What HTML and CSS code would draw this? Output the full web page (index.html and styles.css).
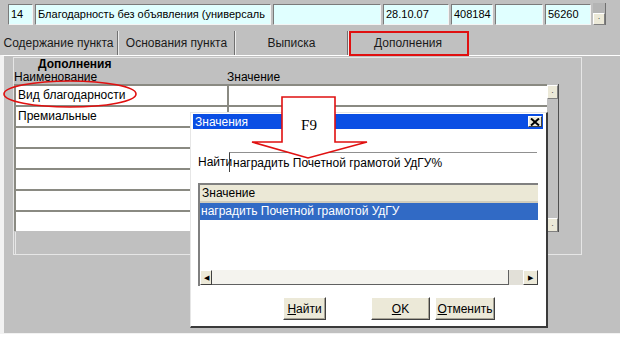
FILE: index.html
```html
<!DOCTYPE html>
<html lang="ru">
  <head>
    <meta charset="UTF-8" />
    <title>Дополнения</title>
    <link rel="stylesheet" href="styles.css">
  </head>
  <body>
    <div class="app">
      <div class="topbar">
        <div class="field w1">14</div>
        <div class="field w2">Благодарность без объявления (универсаль</div>
        <div class="field w3"></div>
        <div class="field w4">28.10.07</div>
        <div class="field w5">408184</div>
        <div class="field w6"></div>
        <div class="field w7">56260</div>
        <div class="mini-scroll"><div class="mini-btn">·</div></div>
      </div>

      <div class="tabs">
        <div class="tab t1">Содержание пункта</div>
        <div class="tab t2">Основания пункта</div>
        <div class="tab t3">Выписка</div>
        <div class="tab t4">Дополнения</div>
      </div>

      <div class="content">
        <div class="group">
          <div class="group-title">Дополнения</div>
          <div class="labels">
            <div class="lbl-name">Наименование</div>
            <div class="lbl-value">Значение</div>
          </div>
          <div class="grid">
            <div class="col names">
              <div class="cell">Вид благодарности</div>
              <div class="cell">Премиальные</div>
              <div class="cell"></div>
              <div class="cell"></div>
              <div class="cell"></div>
              <div class="cell"></div>
              <div class="cell"></div>
            </div>
            <div class="col values">
              <div class="cell"></div>
              <div class="cell"></div>
              <div class="cell"></div>
              <div class="cell"></div>
              <div class="cell"></div>
              <div class="cell"></div>
              <div class="cell"></div>
            </div>
            <div class="vbar">
              <div class="sbtn">·</div>
              <div class="sbtn">·</div>
            </div>
          </div>
          <div class="grid-rest"></div>
        </div>
      </div>

      <!-- окно выбора значения -->
      <div class="dialog">
        <div class="titlebar">
          <span>Значения</span>
          <div class="close">
            <svg width="10" height="8" viewBox="0 0 10 8"><path d="M1 0.5 L9 7.5 M9 0.5 L1 7.5" stroke="#000" stroke-width="2"/></svg>
          </div>
        </div>
        <div class="find-row">
          <span class="find-label">Найти</span>
          <div class="find-input">наградить Почетной грамотой УдГУ%</div>
        </div>
        <div class="listbox">
          <div class="list-head">Значение</div>
          <div class="list-row selected">наградить Почетной грамотой УдГУ</div>
          <div class="list-fill"></div>
          <div class="hscroll">
            <div class="hbtn">&#9664;</div>
            <div class="thumb"></div>
            <div class="track"></div>
            <div class="hbtn right">&#9654;</div>
          </div>
        </div>
        <div class="buttons">
          <div class="btn b-find"><u>Н</u>айти</div>
          <div class="btn b-ok"><u>O</u>K</div>
          <div class="btn b-cancel"><u>О</u>тменить</div>
        </div>
      </div>

      <div class="tab-mark"></div>

      <svg class="marks" width="620" height="334" viewBox="0 0 620 334">
        <ellipse cx="70" cy="94" rx="66" ry="13" fill="none" stroke="#e01010" stroke-width="1.6"/>
        <polygon points="282,97 335,97 335,142 367,142 308,158 252,142 282,142" fill="#fff" stroke="#e01010" stroke-width="1.6"/>
        <text x="309" y="130" text-anchor="middle" class="f9">F9</text>
      </svg>
    </div>
  </body>
</html>
```

FILE: styles.css
```css
body {
  margin: 0;
  background: #fff;
  font-family: "Liberation Sans", Arial, sans-serif;
  font-size: 12px;
  color: #000;
}

.app {
  position: relative;
  width: 620px;
  height: 334px;
  background: #c0c0c0;
  overflow: hidden;
}

/* верхняя строка с полями */
.topbar {
  display: flex;
  gap: 2px;
  height: 31px;
  box-sizing: border-box;
  padding: 4px 0 0 8px;
}

.field {
  height: 21px;
  box-sizing: border-box;
  background: #e0ffff;
  border-top: 1px solid #7a7a7a;
  border-left: 1px solid #7a7a7a;
  border-right: 1px solid #f4f4f4;
  border-bottom: 1px solid #f4f4f4;
  padding: 3px 2px 0;
  font-size: 11px;
  white-space: nowrap;
  overflow: hidden;
}

.w1 { width: 25px; }
.w2 { width: 236px; }
.w3 { width: 108px; }
.w4 { width: 66px; }
.w5 { width: 42px; }
.w6 { width: 48px; }
.w7 { width: 46px; }

.mini-scroll {
  width: 12px;
  height: 22px;
  margin-top: -1px;
  display: flex;
  flex-direction: column;
  justify-content: flex-end;
  background: #b4b4b4;
  border-right: 1px solid #707070;
}

.mini-btn,
.sbtn {
  height: 12px;
  box-sizing: border-box;
  background: #ece9d8;
  border-top: 1px solid #fff;
  border-left: 1px solid #fff;
  border-right: 1px solid #808080;
  border-bottom: 1px solid #808080;
  font-size: 9px;
  line-height: 9px;
  text-align: center;
  color: #555;
}

/* вкладки */
.tabs {
  display: flex;
  height: 24px;
}

.tab {
  box-sizing: border-box;
  display: flex;
  align-items: center;
  justify-content: center;
  border-left: 1px solid #ececec;
  border-right: 1px solid #707070;
  font-size: 12px;
  color: #1a1a1a;
}

.t1 { width: 118px; border-left: none; }
.t2 { width: 117px; }
.t3 { width: 113px; }
.t4 { width: 120px; }

.tab-mark {
  position: absolute;
  left: 349px;
  top: 31px;
  width: 120px;
  height: 25px;
  box-sizing: border-box;
  border: 2px solid #e01010;
}

/* основная панель */
.content {
  height: 279px;
  box-sizing: border-box;
  border-top: 1px solid #fff;
  border-left: 4px solid #f2f2f2;
  border-bottom: 1px solid #f2f2f2;
  padding: 1px 0 0 9px;
}

.group {
  width: 569px;
  height: 198px;
  box-sizing: border-box;
  border: 1px solid #e6e6e6;
  display: flex;
  flex-direction: column;
}

.group-title {
  height: 13px;
  padding-left: 24px;
  font-weight: bold;
  font-size: 12px;
  line-height: 13px;
}

.labels {
  display: flex;
  height: 13px;
  line-height: 12px;
  font-size: 12px;
}

.lbl-name { width: 213px; }

.grid {
  display: flex;
  height: 148px;
}

.col {
  display: flex;
  flex-direction: column;
}

.names { width: 213px; }
.values { width: 320px; }

.cell {
  height: 21px;
  box-sizing: border-box;
  background: #fff;
  border-top: 2px solid #8a8a82;
  border-left: 2px solid #8a8a82;
  padding-left: 2px;
  line-height: 18px;
  font-size: 12px;
  white-space: nowrap;
}

.vbar {
  width: 12px;
  box-sizing: border-box;
  display: flex;
  flex-direction: column;
  justify-content: space-between;
  padding: 1px 0 0;
  border-right: 1px solid #505050;
}

.vbar .sbtn {
  height: 14px;
  line-height: 12px;
}

.grid-rest {
  flex: 1;
  margin-left: 1px;
  border-left: 1px solid #e6e6e6;
}

/* диалог */
.dialog {
  position: absolute;
  left: 190px;
  top: 112px;
  width: 358px;
  height: 216px;
  box-sizing: border-box;
  background: #fff;
  border-left: 1px solid #e6e6e6;
  border-top: 1px solid #e6e6e6;
  border-right: 2px solid #3a3a3a;
  border-bottom: 2px solid #3a3a3a;
  padding: 1px 2px;
}

.titlebar {
  height: 15px;
  margin-right: 1px;
  display: flex;
  align-items: center;
  justify-content: space-between;
  background: #0a4ee4;
  color: #fff;
  padding: 0 1px 0 2px;
  font-size: 12px;
}

.close {
  width: 14px;
  height: 11px;
  box-sizing: border-box;
  background: #ece9d8;
  border-top: 1px solid #fff;
  border-left: 1px solid #fff;
  border-right: 1px solid #404040;
  border-bottom: 1px solid #404040;
  display: flex;
  align-items: center;
  justify-content: center;
}

.find-row {
  display: flex;
  align-items: center;
  margin-top: 23px;
  padding-left: 5px;
}

.find-label {
  width: 31px;
  font-size: 12px;
}

.find-input {
  width: 308px;
  height: 20px;
  box-sizing: border-box;
  border-top: 1px solid #909090;
  border-left: 1px solid #404040;
  padding: 3px 0 0 3px;
  font-size: 12px;
  white-space: nowrap;
}

.listbox {
  margin: 11px 0 0 5px;
  width: 340px;
  height: 103px;
  box-sizing: border-box;
  border-top: 2px solid #808080;
  border-left: 2px solid #808080;
  display: flex;
  flex-direction: column;
}

.list-head {
  height: 16px;
  background: #ebe8d6;
  border-bottom: 2px solid #d0ccbc;
  padding-left: 2px;
  line-height: 16px;
  font-size: 12px;
}

.list-row {
  height: 17px;
  padding-left: 1px;
  line-height: 16px;
  font-size: 12px;
}

.selected {
  background: #316ac5;
  color: #fff;
}

.list-fill { flex: 1; }

.hscroll {
  height: 15px;
  display: flex;
  margin-bottom: 1px;
}

.hbtn {
  width: 12px;
  box-sizing: border-box;
  background: #ece9d8;
  border-top: 1px solid #fff;
  border-left: 1px solid #fff;
  border-right: 1px solid #404040;
  border-bottom: 1px solid #404040;
  font-size: 7px;
  line-height: 13px;
  text-align: center;
}

.hbtn.right { width: 15px; }

.thumb {
  flex: 1;
  background: #f4f3ee;
  border-right: 1px solid #606060;
  border-bottom: 1px solid #606060;
}

.track {
  width: 14px;
  background: #e2e0d8;
}

.buttons {
  display: flex;
  margin-top: 11px;
  padding-left: 90px;
}

.btn {
  height: 23px;
  box-sizing: border-box;
  background: #ece9d8;
  border-top: 1px solid #fff;
  border-left: 1px solid #fff;
  border-right: 1px solid #404040;
  border-bottom: 1px solid #404040;
  box-shadow: inset -1px -1px #a8a496;
  display: flex;
  align-items: center;
  justify-content: center;
  font-size: 12px;
}

.b-find { width: 43px; }
.b-ok { width: 59px; margin-left: 45px; }
.b-cancel { width: 60px; margin-left: 5px; }

/* пометки поверх скриншота */
.marks {
  position: absolute;
  left: 0;
  top: 0;
  pointer-events: none;
}

.f9 {
  font-family: "Liberation Serif", "Times New Roman", serif;
  font-size: 15px;
  fill: #000;
}
```
